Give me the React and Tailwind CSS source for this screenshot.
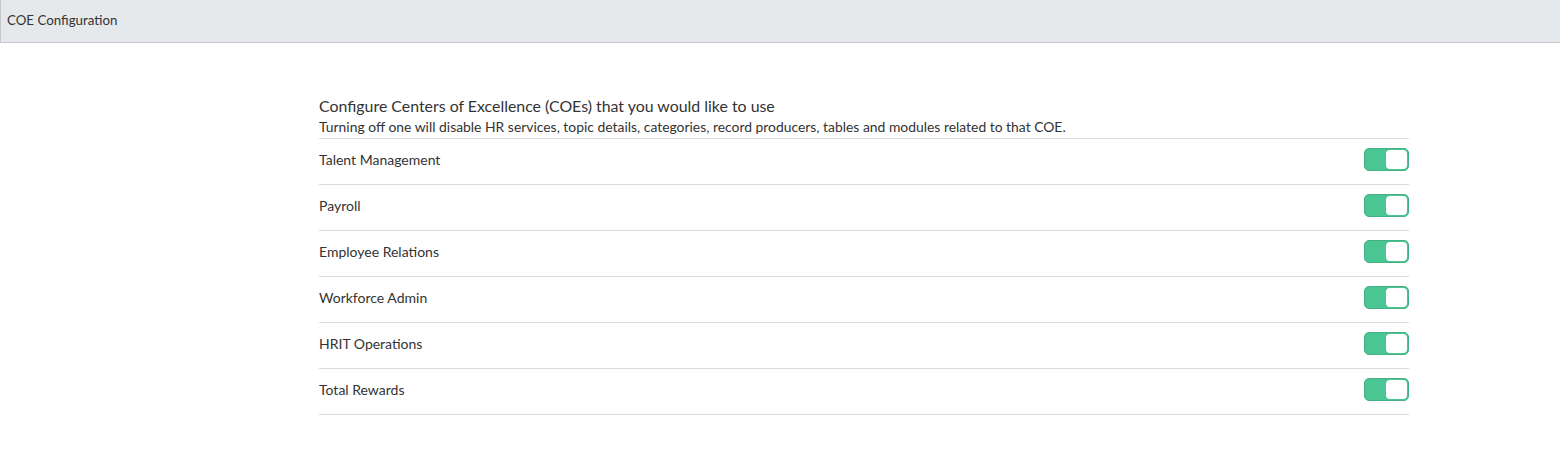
const coes = [
  "Talent Management",
  "Payroll",
  "Employee Relations",
  "Workforce Admin",
  "HRIT Operations",
  "Total Rewards",
];

const Toggle = () => (
  <div className="w-[45px] h-[23px] rounded-[5px] bg-[#4bc594] border border-[#43b184] flex items-center justify-end pr-[1px]">
    <div className="w-[21px] h-[19px] bg-white rounded-[4px]" />
  </div>
);

export default function App() {
  return (
    <div className="w-[1560px] h-[465px] bg-white text-[#333]" style={{ fontFamily: "Lato, sans-serif" }}>
      <div className="h-[43px] bg-[#e6e9ec] border-l border-b border-[#c4c8cc] flex items-center pl-[6px] text-[13.3px]">
        COE Configuration
      </div>
      <div className="ml-[319px] w-[1090px] pt-[52px]">
        <div className="text-[15.9px] leading-[22px]">Configure Centers of Excellence (COEs) that you would like to use</div>
        <div className="text-[13.9px] leading-[20px] pb-[1px] border-b border-[#dcdcdc]">
          Turning off one will disable HR services, topic details, categories, record producers, tables and modules related to that COE.
        </div>
        {coes.map((c) => (
          <div key={c} className="h-[46px] pb-[4px] flex items-center justify-between border-b border-[#dcdcdc] text-[14px]">
            <span>{c}</span>
            <Toggle />
          </div>
        ))}
      </div>
    </div>
  );
}
